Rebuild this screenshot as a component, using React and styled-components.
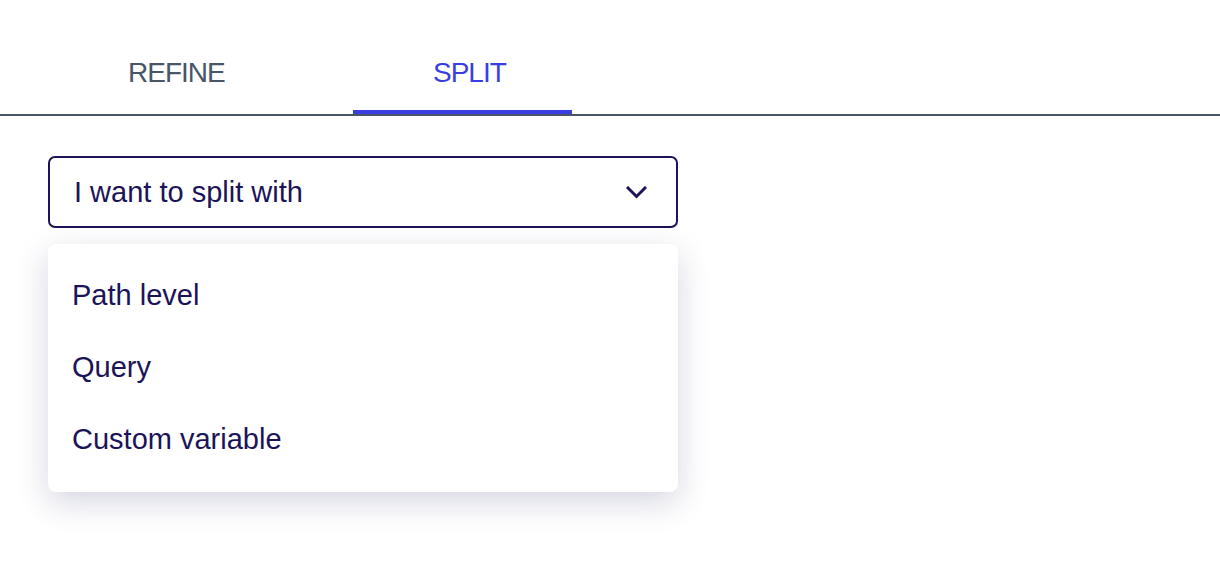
import React, { useState } from "react";
import styled, { createGlobalStyle } from "styled-components";

const GlobalStyle = createGlobalStyle`
  body {
    margin: 0;
    background: #ffffff;
    font-family: "Liberation Sans", Arial, sans-serif;
  }
`;

const TABS = ["REFINE", "SPLIT"];
const OPTIONS = ["Path level", "Query", "Custom variable"];

const ChevronDown = () => (
  <svg width="21" height="13" viewBox="0 0 21 13" fill="none">
    <path
      d="M2 2l8.5 8.5L19 2"
      stroke="#1b1458"
      strokeWidth="3"
      strokeLinecap="square"
    />
  </svg>
);

const App = () => {
  const [active, setActive] = useState(1);
  return (
    <Page>
      <GlobalStyle />
      <TabBar>
        {TABS.map((t, i) => (
          <Tab key={t} active={i === active} onClick={() => setActive(i)}>
            {t}
          </Tab>
        ))}
      </TabBar>
      <Content>
        <Select>
          <SelectLabel>I want to split with</SelectLabel>
          <ChevronDown />
        </Select>
        <Menu>
          {OPTIONS.map((o) => (
            <MenuItem key={o}>{o}</MenuItem>
          ))}
        </Menu>
      </Content>
    </Page>
  );
};

const Page = styled.div`
  width: 1220px;
  height: 562px;
  padding-top: 40px;
  box-sizing: border-box;
  overflow: hidden;
`;

const TabBar = styled.div`
  display: flex;
  align-items: flex-end;
  gap: 63px;
  padding-left: 48px;
  border-bottom: 2px solid #4a5568;
`;

const Tab = styled.div`
  box-sizing: border-box;
  height: 74px;
  padding: 0 65px 4px 80px;
  display: flex;
  align-items: center;
  font-size: 28px;
  letter-spacing: -1px;
  color: ${(p) => (p.active ? "#3a3ee0" : "#4a5568")};
  border-bottom: 4px solid ${(p) => (p.active ? "#3a3ee0" : "transparent")};
  cursor: pointer;
  &:first-child {
    width: 242px;
  }
  &:last-child {
    width: 219px;
  }
`;

const Content = styled.div`
  padding: 40px 0 0 48px;
  width: 630px;
`;

const Select = styled.div`
  box-sizing: border-box;
  height: 72px;
  border: 2px solid #1b1458;
  border-radius: 7px;
  display: flex;
  align-items: center;
  justify-content: space-between;
  padding: 0 29px 0 24px;
`;

const SelectLabel = styled.span`
  font-size: 29px;
  color: #1b1458;
`;

const Menu = styled.div`
  margin-top: 16px;
  background: #ffffff;
  border-radius: 8px;
  padding: 15px 0 17px;
  box-shadow: 0 10px 32px rgba(45, 45, 110, 0.2);
`;

const MenuItem = styled.div`
  height: 72px;
  display: flex;
  align-items: center;
  padding-left: 24px;
  font-size: 29px;
  color: #1b1458;
  cursor: pointer;
`;

export default App;
